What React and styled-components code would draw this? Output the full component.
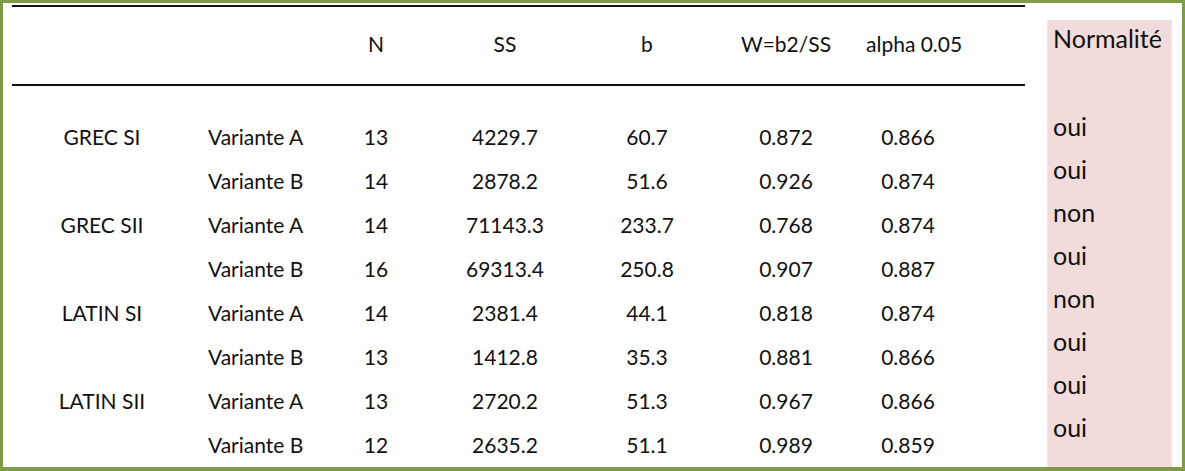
import React from "react";
import styled, { createGlobalStyle } from "styled-components";

const GlobalStyle = createGlobalStyle`
  html, body {
    margin: 0;
    padding: 0;
    background: #ffffff;
  }
  body {
    font-family: "Lato", "Liberation Sans", sans-serif;
    color: #111;
  }
`;

const Frame = styled.div`
  box-sizing: border-box;
  width: 1185px;
  height: 471px;
  border: 3px solid #7f9b47;
  border-bottom-width: 4px;
  display: flex;
  align-items: flex-start;
  background: #fff;
  overflow: hidden;
`;

const TableArea = styled.div`
  margin-left: 9px;
  margin-top: 2px;
  width: 1013px;
`;

const columns = "180px 138px 92px 166px 118px 160px 84px 75px";

const HeaderRow = styled.div`
  box-sizing: border-box;
  display: grid;
  grid-template-columns: ${columns};
  align-items: center;
  height: 81px;
  padding-bottom: 5px;
  border-top: 2px solid #111;
  border-bottom: 2px solid #111;
  font-size: 21px;
`;

const Body = styled.div`
  padding-top: 28px;
`;

const Row = styled.div`
  display: grid;
  grid-template-columns: ${columns};
  align-items: center;
  height: 44px;
  font-size: 21px;
`;

const Cell = styled.div`
  text-align: ${({ $align }) => $align || "center"};
  padding-left: ${({ $indent }) => $indent || 0}px;
  white-space: nowrap;
`;

const NormalColumn = styled.div`
  box-sizing: border-box;
  margin-left: 22px;
  margin-top: 17px;
  width: 125px;
  height: 460px;
  background: #f2dcdb;
  border-left: 1px solid #f8e4e4;
  border-right: 1px solid #f8e4e4;
  padding-left: 5px;
  font-size: 25px;
`;

const NormalTitle = styled.div`
  height: 37px;
  line-height: 37px;
  margin-bottom: 48px;
`;

const NormalValue = styled.div`
  height: 43px;
  line-height: 43px;
`;

const rows = [
  ["GREC SI", "Variante A", "13", "4229.7", "60.7", "0.872", "0.866"],
  ["", "Variante B", "14", "2878.2", "51.6", "0.926", "0.874"],
  ["GREC SII", "Variante A", "14", "71143.3", "233.7", "0.768", "0.874"],
  ["", "Variante B", "16", "69313.4", "250.8", "0.907", "0.887"],
  ["LATIN SI", "Variante A", "14", "2381.4", "44.1", "0.818", "0.874"],
  ["", "Variante B", "13", "1412.8", "35.3", "0.881", "0.866"],
  ["LATIN SII", "Variante A", "13", "2720.2", "51.3", "0.967", "0.866"],
  ["", "Variante B", "12", "2635.2", "51.1", "0.989", "0.859"],
];

const normality = ["oui", "oui", "non", "oui", "non", "oui", "oui", "oui"];

export default function App() {
  return (
    <>
      <GlobalStyle />
      <Frame>
        <TableArea>
          <HeaderRow>
            <Cell />
            <Cell />
            <Cell>N</Cell>
            <Cell>SS</Cell>
            <Cell>b</Cell>
            <Cell>W=b2/SS</Cell>
            <Cell>alpha 0.05</Cell>
            <Cell />
          </HeaderRow>
          <Body>
            {rows.map((r, i) => (
              <Row key={i}>
                <Cell>{r[0]}</Cell>
                <Cell $align="left" $indent={16}>{r[1]}</Cell>
                <Cell>{r[2]}</Cell>
                <Cell>{r[3]}</Cell>
                <Cell>{r[4]}</Cell>
                <Cell>{r[5]}</Cell>
                <Cell>{r[6]}</Cell>
                <Cell />
              </Row>
            ))}
          </Body>
        </TableArea>
        <NormalColumn>
          <NormalTitle>Normalité</NormalTitle>
          {normality.map((v, i) => (
            <NormalValue key={i}>{v}</NormalValue>
          ))}
        </NormalColumn>
      </Frame>
    </>
  );
}
